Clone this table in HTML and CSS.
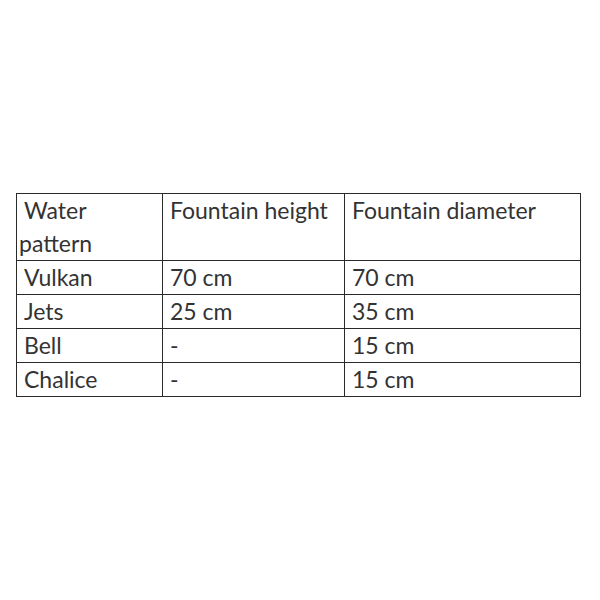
FILE: index.html
```html
<!DOCTYPE html>
<html>
<head>
<meta charset="utf-8">
<link rel="stylesheet" href="styles.css">
</head>
<body>
<div class="page">
  <table class="specs">
    <colgroup>
      <col class="c1"><col class="c2"><col class="c3">
    </colgroup>
    <tr><td>Water pattern</td><td>Fountain height</td><td>Fountain diameter</td></tr>
    <tr><td>Vulkan</td><td>70 cm</td><td>70 cm</td></tr>
    <tr><td>Jets</td><td>25 cm</td><td>35 cm</td></tr>
    <tr><td>Bell</td><td>-</td><td>15 cm</td></tr>
    <tr><td>Chalice</td><td>-</td><td>15 cm</td></tr>
  </table>
</div>
</body>
</html>
```
FILE: styles.css
```css
html, body {
  margin: 0;
  padding: 0;
  background: #ffffff;
}
.page {
  width: 600px;
  height: 600px;
  padding: 193px 0 0 16px;
  box-sizing: border-box;
}
.specs {
  border-collapse: collapse;
  table-layout: fixed;
  width: 564px;
  font-family: Lato, "Open Sans", sans-serif;
  font-size: 23px;
  color: #333333;
}
.c1 { width: 146px; }
.c2 { width: 182px; }
.c3 { width: 236px; }
.specs td {
  border: 1px solid #2a2a2a;
  padding: 0 6px 0 2px;
  text-indent: 5px;
  line-height: 33px;
  vertical-align: top;
}
```
